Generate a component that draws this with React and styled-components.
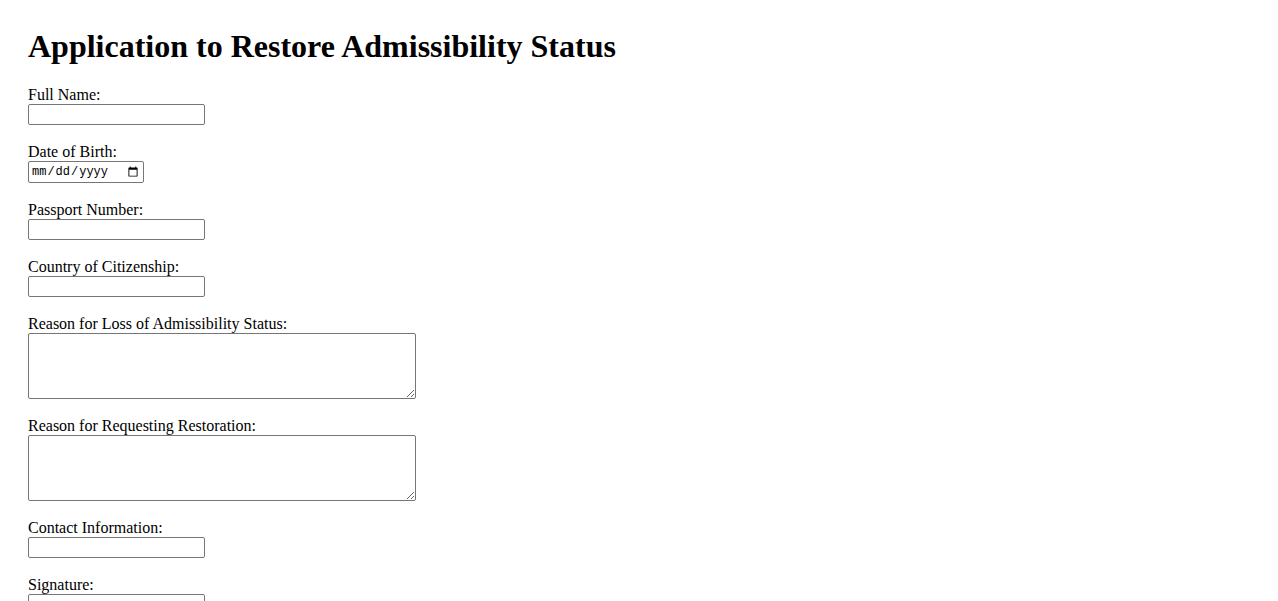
import React from "react";
import styled, { createGlobalStyle } from "styled-components";

const GlobalStyle = createGlobalStyle`
  body {
    margin: 8px;
    background: #fff;
    color: #000;
    font-family: "Liberation Serif", "Times New Roman", serif;
    font-size: 16px;
  }
`;

const Page = styled.div`
  padding: 20px;
`;

const Title = styled.h1`
  font-size: 32px;
  font-weight: bold;
  margin: 0 0 21.44px;
`;

const Form = styled.form`
  display: flex;
  flex-direction: column;
  align-items: flex-start;
`;

const Field = styled.div`
  display: flex;
  flex-direction: column;
  align-items: flex-start;
  margin-bottom: 18.6px;
`;

const Label = styled.label`
  display: block;
  line-height: 17.4px;
`;

const Input = styled.input`
  box-sizing: border-box;
  width: ${(p) => (p.type === "date" ? "116px" : "177px")};
  height: ${(p) => (p.type === "date" ? "22px" : "21px")};
  border: 1px solid #767676;
  border-radius: 2px;
  padding: 1px 2px;
  font-family: ${(p) =>
    p.type === "date" ? `"Liberation Mono", monospace` : `"Liberation Sans", Arial, sans-serif`};
  font-size: ${(p) => (p.type === "date" ? "12px" : "13.33px")};
  background: #fff;
  color: #000;
`;

const TextArea = styled.textarea`
  box-sizing: border-box;
  width: 388px;
  height: 66px;
  border: 1px solid #767676;
  border-radius: 2px;
  padding: 2px;
  font-family: "Liberation Mono", monospace;
  font-size: 13.33px;
  background: #fff;
`;

const fields = [
  { id: "fullName", label: "Full Name:" },
  { id: "dob", label: "Date of Birth:", type: "date" },
  { id: "passport", label: "Passport Number:" },
  { id: "country", label: "Country of Citizenship:" },
  { id: "lossReason", label: "Reason for Loss of Admissibility Status:", area: true },
  { id: "restoreReason", label: "Reason for Requesting Restoration:", area: true },
  { id: "contact", label: "Contact Information:" },
  { id: "signature", label: "Signature:" },
];

const App = () => {
  return (
    <Page>
      <GlobalStyle />
      <Title>Application to Restore Admissibility Status</Title>
      <Form onSubmit={(e) => e.preventDefault()}>
        {fields.map((f) => (
          <Field key={f.id}>
            <Label htmlFor={f.id}>{f.label}</Label>
            {f.area ? (
              <TextArea id={f.id} name={f.id} />
            ) : (
              <Input id={f.id} name={f.id} type={f.type || "text"} />
            )}
          </Field>
        ))}
      </Form>
    </Page>
  );
};

export default App;
